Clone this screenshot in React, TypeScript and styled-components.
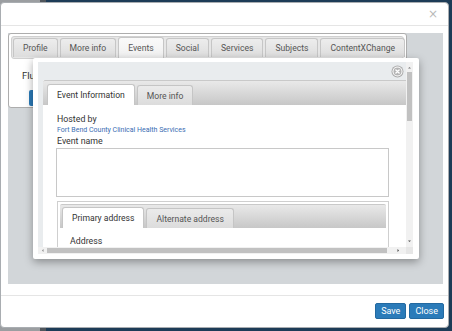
import React from 'react';
import styled, { createGlobalStyle } from 'styled-components';

const Global = createGlobalStyle`
  html, body { margin: 0; padding: 0; }
  body {
    width: 452px;
    height: 331px;
    overflow: hidden;
    background: linear-gradient(to right, #9b9ea1 0, #9b9ea1 40px, #50565c 40px, #50565c 46px, #1d3c57 46px);
    font-family: Roboto, "Liberation Sans", sans-serif;
  }
`;

const Modal = styled.div`
  box-sizing: border-box;
  margin-top: 2px;
  width: 449px;
  height: 326px;
  background: #fff;
  border: 1px solid #a9adb1;
  border-radius: 4px;
  display: flex;
  flex-direction: column;
`;

const Header = styled.div`
  flex: none;
  height: 22px;
  border-bottom: 1px solid #e5e5e5;
  display: flex;
  align-items: center;
  justify-content: flex-end;
  padding-right: 10px;
`;

const CloseX = styled.span`
  color: #b9b9b9;
  font-size: 12px;
  line-height: 1;
  font-family: "DejaVu Sans", sans-serif;
`;

const Body = styled.div`
  flex: none;
  padding: 7px 5px 11px 7px;
`;

const Panel = styled.div`
  position: relative;
  height: 251px;
  background: #d2d6d9;
`;

const OuterTabs = styled.div`
  box-sizing: border-box;
  width: 399px;
  height: 75px;
  border: 1px solid #adadad;
  border-radius: 3px;
  background: #fff;
  padding: 2px;
  overflow: hidden;
`;

const OuterNav = styled.div`
  height: 21px;
  display: flex;
  align-items: flex-end;
  gap: 2px;
  padding-left: 1px;
  background: #e6e6e6;
  border: 1px solid #d0d0d0;
  border-radius: 3px;
`;

const OuterTab = styled.div<{ $active?: boolean }>`
  box-sizing: border-box;
  height: ${(p) => (p.$active ? 21 : 19)}px;
  margin-bottom: ${(p) => (p.$active ? 0 : 1)}px;
  padding: 0 9px;
  display: flex;
  align-items: center;
  border: 1px solid #c6c6c6;
  border-bottom: none;
  border-radius: 3px 3px 0 0;
  background: ${(p) => (p.$active ? 'linear-gradient(#fafafa, #efefef)' : 'linear-gradient(#ededed, #dddddd)')};
  color: #555;
  font-size: 8.6px;
  white-space: nowrap;
`;

const OuterContent = styled.div`
  padding: 11px 0 0 11px;
`;

const PlainText = styled.div`
  font-size: 9.5px;
  line-height: 11px;
  color: #333;
`;

const BlueButton = styled.div`
  margin: 9px 0 0 7px;
  width: 40px;
  height: 16px;
  background: #2b7bb9;
  border-radius: 2px;
`;

const Dialog = styled.div`
  position: absolute;
  left: 25px;
  top: 25px;
  box-sizing: border-box;
  width: 386px;
  height: 201px;
  padding: 4px 6px 5px 5px;
  background: #fff;
  border-radius: 2px;
  box-shadow: 0 3px 8px rgba(0, 0, 0, 0.35);
`;

const DialogClose = styled.div`
  position: absolute;
  left: 358px;
  top: 5px;
  width: 13px;
  height: 13px;
`;

const ScrollFrame = styled.div`
  display: grid;
  grid-template-columns: 368px 7px;
  grid-template-rows: 185px 7px;
  height: 192px;
`;

const Viewport = styled.div`
  overflow: hidden;
  background: #e9ecee;
  padding: 18px 0 0 5px;
`;

const ContentPanel = styled.div`
  width: 380px;
  background: #fff;
  height: 200px;
`;

const InnerNav = styled.div<{ $inset?: boolean }>`
  box-sizing: border-box;
  height: ${(p) => (p.$inset ? 24 : 25)}px;
  display: flex;
  align-items: flex-end;
  gap: 2px;
  padding-left: ${(p) => (p.$inset ? 2 : 4)}px;
  background: linear-gradient(#e9e9e9, #c7c7c7);
  border-top: 1px solid #c9c9c9;
  border-radius: 2px 2px 0 0;
`;

const InnerTab = styled.div<{ $active?: boolean }>`
  box-sizing: border-box;
  height: ${(p) => (p.$active ? 21 : 20)}px;
  padding: 0 9px;
  display: flex;
  align-items: center;
  border: 1px solid #c5c5c5;
  border-bottom: none;
  border-radius: 3px 3px 0 0;
  background: ${(p) => (p.$active ? '#fff' : 'linear-gradient(#ebebeb, #dcdcdc)')};
  color: ${(p) => (p.$active ? '#333' : '#555')};
  font-size: 8.6px;
  white-space: nowrap;
`;

const Form = styled.div`
  padding: 9px 0 0 13px;
`;

const Label = styled.div<{ $gap?: number }>`
  padding-left: 1px;
  font-size: 8.8px;
  line-height: 11px;
  padding-bottom: ${(p) => p.$gap ?? 0}px;
  color: #333;
`;

const Link = styled.a`
  display: block;
  padding-left: 1px;
  font-size: 7px;
  line-height: 11px;
  color: #3a6eb3;
  text-decoration: none;
`;

const NameBox = styled.textarea`
  display: block;
  box-sizing: border-box;
  width: 333px;
  height: 49px;
  margin: 0 0 4px 0;
  border: 1px solid #c8c8c8;
  resize: none;
  outline: none;
`;

const AddressBox = styled.div`
  box-sizing: border-box;
  width: 332px;
  margin-left: 1px;
  border: 1px solid #cfcfcf;
  padding: 2px;
  height: 60px;
`;

const AddressBody = styled.div`
  padding: 8px 0 0 9px;
`;

const VBar = styled.div`
  position: relative;
  background: #f1f1f1;
`;

const HBar = styled.div`
  position: relative;
  background: #f1f1f1;
`;

const Corner = styled.div`
  background: #e6e6e6;
`;

const Thumb = styled.div<{ $vertical?: boolean }>`
  position: absolute;
  background: #c1c1c1;
  ${(p) => (p.$vertical ? 'left: 1px; right: 1px; top: 10px; height: 49px;' : 'top: 1px; bottom: 1px; left: 9px; width: 340px;')}
`;

const Arrow = styled.svg`
  position: absolute;
`;

const Footer = styled.div`
  flex: 1;
  border-top: 1px solid #e5e5e5;
  display: flex;
  justify-content: flex-end;
  align-items: flex-start;
  gap: 3px;
  padding: 7px 4px 0 0;
`;

const Button = styled.button`
  box-sizing: border-box;
  height: 16px;
  padding: 0 5px;
  background: #2b7bb9;
  border: 1px solid #2369a0;
  border-radius: 2px;
  color: #fff;
  font-family: Roboto, "Liberation Sans", sans-serif;
  font-size: 9px;
  line-height: 14px;
`;

const outerTabs = ['Profile', 'More info', 'Events', 'Social', 'Services', 'Subjects', 'ContentXChange'];

export default function App() {
  return (
    <>
      <Global />
      <Modal>
        <Header>
          <CloseX>×</CloseX>
        </Header>
        <Body>
          <Panel>
            <OuterTabs>
              <OuterNav>
                {outerTabs.map((t) => (
                  <OuterTab key={t} $active={t === 'Events'}>
                    {t}
                  </OuterTab>
                ))}
              </OuterNav>
              <OuterContent>
                <PlainText>Flu Clinic</PlainText>
                <BlueButton />
              </OuterContent>
            </OuterTabs>
            <Dialog>
              <ScrollFrame>
                <Viewport>
                  <ContentPanel>
                    <InnerNav>
                      <InnerTab $active>Event Information</InnerTab>
                      <InnerTab>More info</InnerTab>
                    </InnerNav>
                    <Form>
                      <Label>Hosted by</Label>
                      <Link>Fort Bend County Clinical Health Services</Link>
                      <Label $gap={1}>Event name</Label>
                      <NameBox readOnly />
                      <AddressBox>
                        <InnerNav $inset>
                          <InnerTab $active>Primary address</InnerTab>
                          <InnerTab>Alternate address</InnerTab>
                        </InnerNav>
                        <AddressBody>
                          <Label>Address</Label>
                        </AddressBody>
                      </AddressBox>
                    </Form>
                  </ContentPanel>
                </Viewport>
                <VBar>
                  <Arrow width="7" height="7" viewBox="0 0 7 7" style={{ top: 2, left: 0 }}>
                    <path d="M2 4.5 L3.5 3 L5 4.5 Z" fill="#777" />
                  </Arrow>
                  <Thumb $vertical />
                  <Arrow width="7" height="7" viewBox="0 0 7 7" style={{ bottom: 2, left: 0 }}>
                    <path d="M2 2.5 L3.5 4 L5 2.5 Z" fill="#555" />
                  </Arrow>
                </VBar>
                <HBar>
                  <Arrow width="7" height="7" viewBox="0 0 7 7" style={{ left: 1, top: 0 }}>
                    <path d="M4.5 2 L3 3.5 L4.5 5 Z" fill="#888" />
                  </Arrow>
                  <Thumb />
                  <Arrow width="7" height="7" viewBox="0 0 7 7" style={{ right: 4, top: 0 }}>
                    <path d="M2.5 2 L4 3.5 L2.5 5 Z" fill="#444" />
                  </Arrow>
                </HBar>
                <Corner />
              </ScrollFrame>
              <DialogClose>
                <svg width="13" height="13" viewBox="0 0 13 13">
                  <circle cx="6.5" cy="6.5" r="6" fill="#a9a9a9" />
                  <circle cx="6.5" cy="6.5" r="5" fill="#fff" />
                  <circle cx="6.5" cy="6.5" r="4" fill="#b4b4b4" />
                  <path d="M4.9 4.9 L8.1 8.1 M8.1 4.9 L4.9 8.1" stroke="#fff" strokeWidth="1.4" strokeLinecap="round" />
                </svg>
              </DialogClose>
            </Dialog>
          </Panel>
        </Body>
        <Footer>
          <Button>Save</Button>
          <Button>Close</Button>
        </Footer>
      </Modal>
    </>
  );
}
